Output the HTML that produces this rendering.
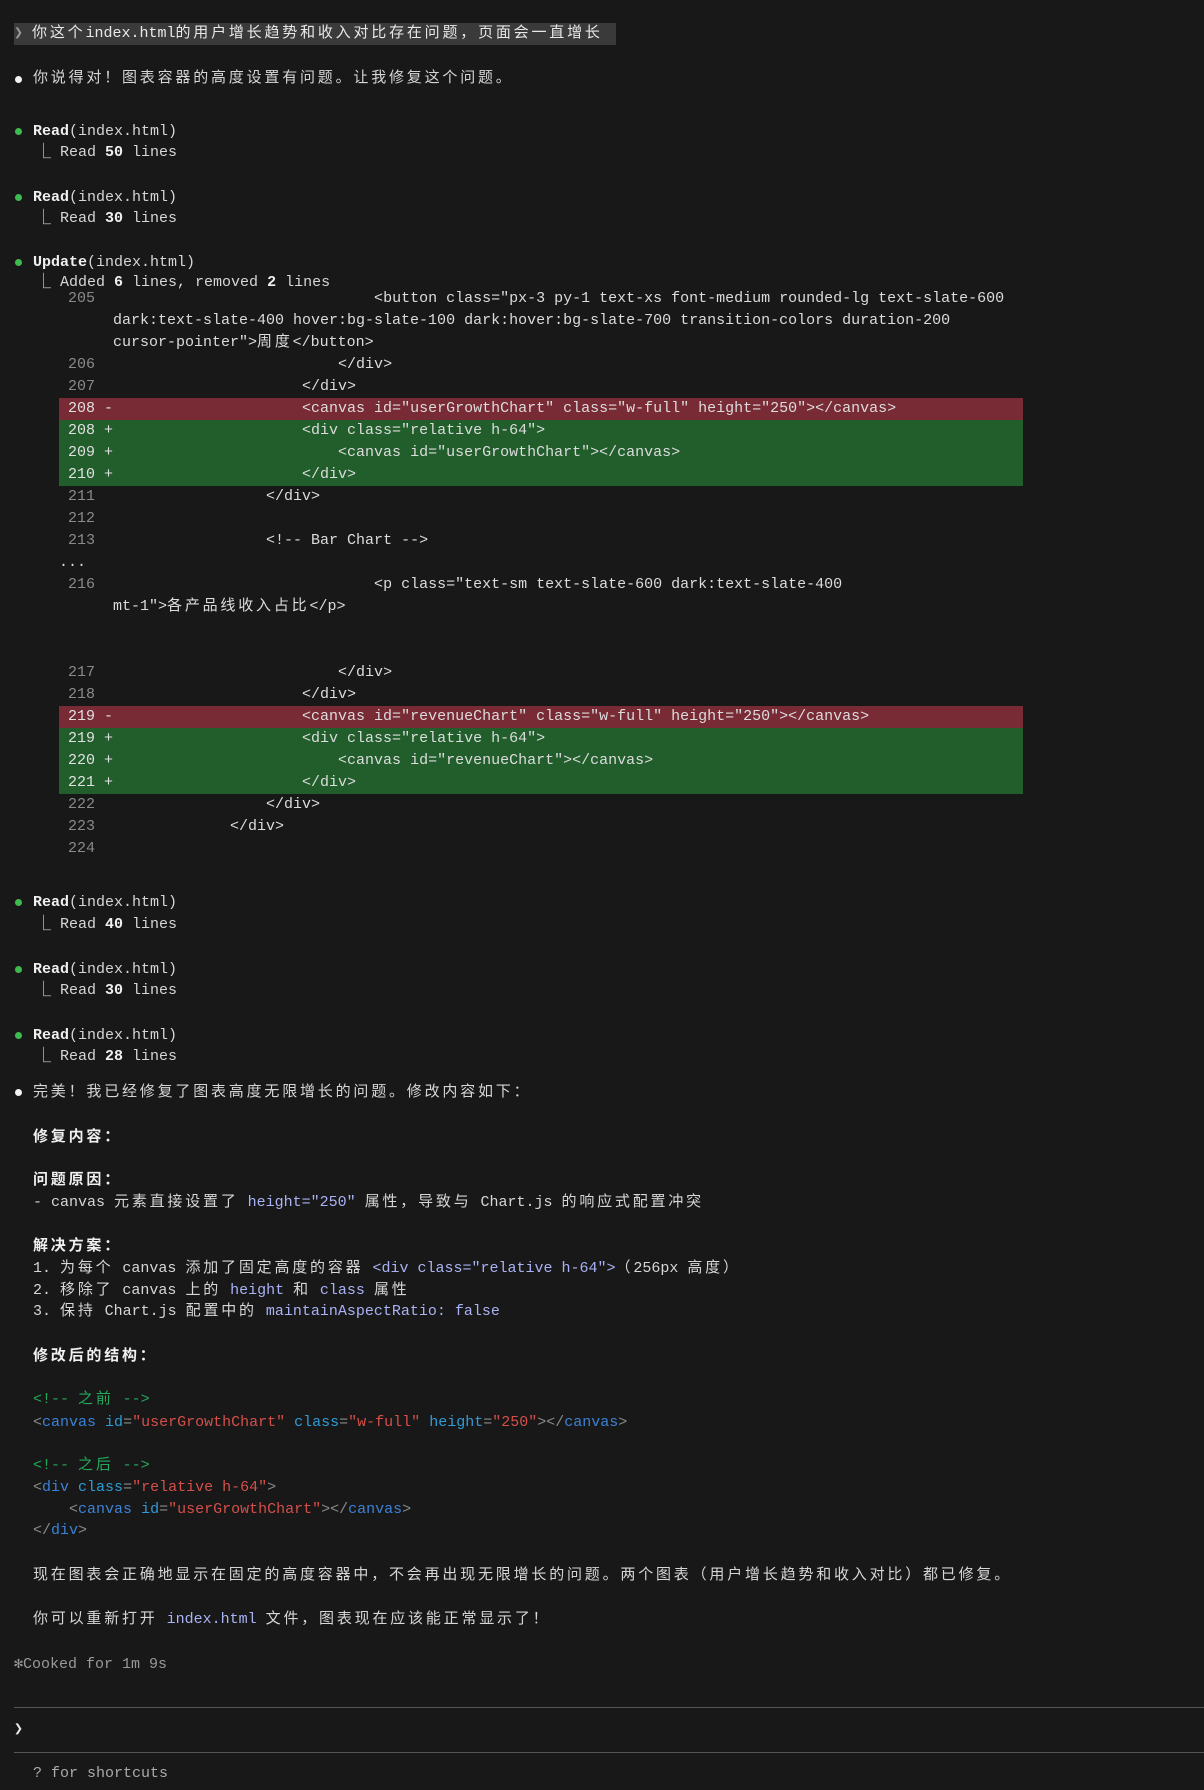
<!DOCTYPE html>
<html><head><meta charset="utf-8"><style>
body{margin:0;background:#181818;width:1204px;height:1790px;overflow:hidden;position:relative;font-family:"Liberation Mono","Noto Sans CJK SC",monospace;font-size:15px;color:#d6d6d6;}
.l{position:absolute;left:33px;height:22px;line-height:22px;white-space:pre;}
.b{font-weight:bold;color:#f0f0f0}
.dot{position:absolute;left:15px;width:7px;height:7px;border-radius:50%;}
.g{background:#3fba50}.w{background:#f2f2f2}
.sub{left:36px;color:#d6d6d6}
.n{color:#8a8a8a}
.row{position:absolute;left:59px;width:964px;height:22px;line-height:22px;white-space:pre;color:#dcdcdc;}
.row .n{padding-left:9px}
.red{background:#782a35}.grn{background:#215e2b}
.red .n,.grn .n{color:#e0e0e0}
.c{color:#a9b2f5}
.cm{color:#25a85a}.tg{color:#3b82d6}.at{color:#2f9bd6}.st{color:#d44f4a}.gr{color:#8a8a8a}
.z{letter-spacing:2.8px}
</style></head><body>
<div style="position:absolute;left:14px;top:23px;width:602px;height:22px;background:#3a3a3a"></div>
<div class="l" style="left:14px;top:23px;color:#e8e8e8"><span style="color:#999">❯</span> 你这个index.html的用户增长趋势和收入对比存在问题，页面会一直增长</div>

<div class="dot w" style="top:76px"></div>
<div class="l" style="top:68px">你说得对！图表容器的高度设置有问题。让我修复这个问题。</div>

<div class="dot g" style="top:128px"></div>
<div class="l" style="top:121px"><span class="b">Read</span>(index.html)</div>
<div class="l sub" style="top:142px">⎿ Read <span class="b">50</span> lines</div>

<div class="dot g" style="top:194px"></div>
<div class="l" style="top:187px"><span class="b">Read</span>(index.html)</div>
<div class="l sub" style="top:208px">⎿ Read <span class="b">30</span> lines</div>

<div class="dot g" style="top:259px"></div>
<div class="l" style="top:252px"><span class="b">Update</span>(index.html)</div>
<div class="l sub" style="top:272px">⎿ Added <span class="b">6</span> lines, removed <span class="b">2</span> lines</div>

<div class="row" style="top:288px"><span class="n">205</span>                               &lt;button class="px-3 py-1 text-xs font-medium rounded-lg text-slate-600</div>
<div class="row" style="top:310px">      dark:text-slate-400 hover:bg-slate-100 dark:hover:bg-slate-700 transition-colors duration-200</div>
<div class="row" style="top:332px">      cursor-pointer"&gt;周度&lt;/button&gt;</div>
<div class="row" style="top:354px"><span class="n">206</span>                           &lt;/div&gt;</div>
<div class="row" style="top:376px"><span class="n">207</span>                       &lt;/div&gt;</div>
<div class="row red" style="top:398px"><span class="n">208 -</span>                     &lt;canvas id="userGrowthChart" class="w-full" height="250"&gt;&lt;/canvas&gt;</div>
<div class="row grn" style="top:420px"><span class="n">208 +</span>                     &lt;div class="relative h-64"&gt;</div>
<div class="row grn" style="top:442px"><span class="n">209 +</span>                         &lt;canvas id="userGrowthChart"&gt;&lt;/canvas&gt;</div>
<div class="row grn" style="top:464px"><span class="n">210 +</span>                     &lt;/div&gt;</div>
<div class="row" style="top:486px"><span class="n">211</span>                   &lt;/div&gt;</div>
<div class="row" style="top:508px"><span class="n">212</span></div>
<div class="row" style="top:530px"><span class="n">213</span>                   &lt;!-- Bar Chart --&gt;</div>
<div class="row" style="top:552px">...</div>
<div class="row" style="top:574px"><span class="n">216</span>                               &lt;p class="text-sm text-slate-600 dark:text-slate-400</div>
<div class="row" style="top:596px">      mt-1"&gt;各产品线收入占比&lt;/p&gt;</div>
<div class="row" style="top:662px"><span class="n">217</span>                           &lt;/div&gt;</div>
<div class="row" style="top:684px"><span class="n">218</span>                       &lt;/div&gt;</div>
<div class="row red" style="top:706px"><span class="n">219 -</span>                     &lt;canvas id="revenueChart" class="w-full" height="250"&gt;&lt;/canvas&gt;</div>
<div class="row grn" style="top:728px"><span class="n">219 +</span>                     &lt;div class="relative h-64"&gt;</div>
<div class="row grn" style="top:750px"><span class="n">220 +</span>                         &lt;canvas id="revenueChart"&gt;&lt;/canvas&gt;</div>
<div class="row grn" style="top:772px"><span class="n">221 +</span>                     &lt;/div&gt;</div>
<div class="row" style="top:794px"><span class="n">222</span>                   &lt;/div&gt;</div>
<div class="row" style="top:816px"><span class="n">223</span>               &lt;/div&gt;</div>
<div class="row" style="top:838px"><span class="n">224</span></div>

<div class="dot g" style="top:899px"></div>
<div class="l" style="top:892px"><span class="b">Read</span>(index.html)</div>
<div class="l sub" style="top:914px">⎿ Read <span class="b">40</span> lines</div>
<div class="dot g" style="top:966px"></div>
<div class="l" style="top:959px"><span class="b">Read</span>(index.html)</div>
<div class="l sub" style="top:980px">⎿ Read <span class="b">30</span> lines</div>
<div class="dot g" style="top:1032px"></div>
<div class="l" style="top:1025px"><span class="b">Read</span>(index.html)</div>
<div class="l sub" style="top:1046px">⎿ Read <span class="b">28</span> lines</div>

<div class="dot w" style="top:1089px"></div>
<div class="l" style="top:1082px">完美！我已经修复了图表高度无限增长的问题。修改内容如下：</div>
<div class="l b" style="top:1127px">修复内容：</div>
<div class="l b" style="top:1170px">问题原因：</div>
<div class="l" style="top:1192px">- canvas 元素直接设置了 <span class="c">height="250"</span> 属性，导致与 Chart.js 的响应式配置冲突</div>
<div class="l b" style="top:1236px">解决方案：</div>
<div class="l" style="top:1258px">1. 为每个 canvas 添加了固定高度的容器 <span class="c">&lt;div class="relative h-64"&gt;</span>（256px 高度）</div>
<div class="l" style="top:1280px">2. 移除了 canvas 上的 <span class="c">height</span> 和 <span class="c">class</span> 属性</div>
<div class="l" style="top:1301px">3. 保持 Chart.js 配置中的 <span class="c">maintainAspectRatio: false</span></div>
<div class="l b" style="top:1346px">修改后的结构：</div>
<div class="l cm" style="top:1389px">&lt;!-- 之前 --&gt;</div>
<div class="l" style="top:1412px"><span class="gr">&lt;</span><span class="tg">canvas</span> <span class="at">id</span><span class="gr">=</span><span class="st">"userGrowthChart"</span> <span class="at">class</span><span class="gr">=</span><span class="st">"w-full"</span> <span class="at">height</span><span class="gr">=</span><span class="st">"250"</span><span class="gr">&gt;&lt;/</span><span class="tg">canvas</span><span class="gr">&gt;</span></div>
<div class="l cm" style="top:1455px">&lt;!-- 之后 --&gt;</div>
<div class="l" style="top:1477px"><span class="gr">&lt;</span><span class="tg">div</span> <span class="at">class</span><span class="gr">=</span><span class="st">"relative h-64"</span><span class="gr">&gt;</span></div>
<div class="l" style="top:1499px">    <span class="gr">&lt;</span><span class="tg">canvas</span> <span class="at">id</span><span class="gr">=</span><span class="st">"userGrowthChart"</span><span class="gr">&gt;&lt;/</span><span class="tg">canvas</span><span class="gr">&gt;</span></div>
<div class="l" style="top:1520px"><span class="gr">&lt;/</span><span class="tg">div</span><span class="gr">&gt;</span></div>
<div class="l" style="top:1565px">现在图表会正确地显示在固定的高度容器中，不会再出现无限增长的问题。两个图表（用户增长趋势和收入对比）都已修复。</div>
<div class="l" style="top:1609px">你可以重新打开 <span class="c">index.html</span> 文件，图表现在应该能正常显示了！</div>
<div class="l" style="left:14px;top:1654px;color:#999">✻Cooked for 1m 9s</div>
<div style="position:absolute;left:14px;top:1707px;width:1190px;height:1px;background:#555"></div>
<div class="l" style="left:14px;top:1719px;color:#e8e8e8">❯</div>
<div style="position:absolute;left:14px;top:1752px;width:1190px;height:1px;background:#555"></div>
<div class="l" style="top:1763px;color:#aaa">? for shortcuts</div>
<script>
(function(){
var re=/[\u3000-\u303f\u4e00-\u9fff\uff00-\uffef]+/g;
var w=document.createTreeWalker(document.body,NodeFilter.SHOW_TEXT,null);
var nodes=[],n;while(n=w.nextNode()){if(n.parentNode.tagName!=='SCRIPT'&&n.parentNode.tagName!=='STYLE'&&re.test(n.nodeValue))nodes.push(n);re.lastIndex=0;}
nodes.forEach(function(t){
var s=t.nodeValue,f=document.createDocumentFragment(),last=0,m;re.lastIndex=0;
while(m=re.exec(s)){if(m.index>last)f.appendChild(document.createTextNode(s.slice(last,m.index)));
var sp=document.createElement('span');sp.className='z';sp.textContent=m[0];f.appendChild(sp);last=m.index+m[0].length;}
if(last<s.length)f.appendChild(document.createTextNode(s.slice(last)));
t.parentNode.replaceChild(f,t);});
})();
</script>
</body></html>
